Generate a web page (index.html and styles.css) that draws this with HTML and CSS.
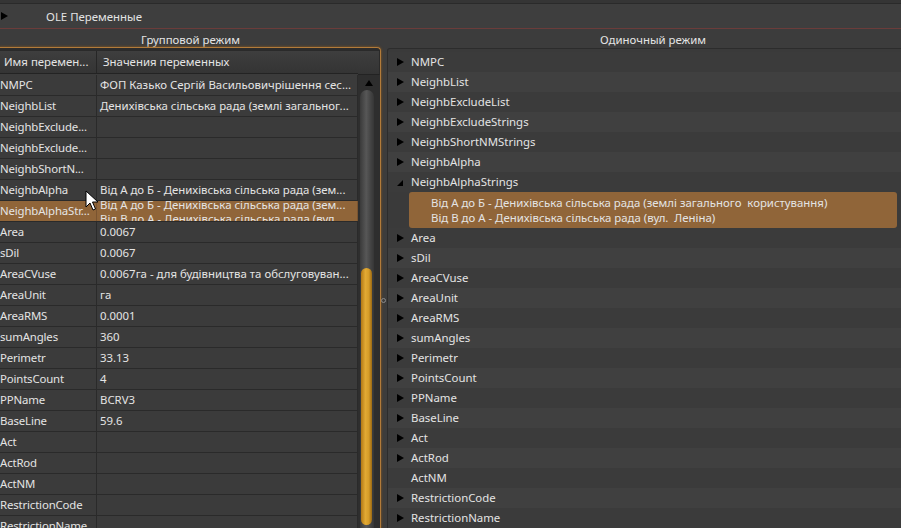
FILE: index.html
```html
<!DOCTYPE html>
<html>
<head>
<meta charset="utf-8">
<link rel="stylesheet" href="styles.css">
</head>
<body>
<div class="topstrip"></div>
<div class="olebar"><span class="tri"></span><span class="ole-text">OLE Переменные</span></div>
<div class="panes">
  <div class="pane left">
    <div class="pane-title">Групповой режим</div>
    <div class="gbox">
      <div class="tbl">
        <div class="cols">
          <div class="hrow">
            <div class="hcell name">Имя  перемен...</div>
            <div class="hcell val">Значения переменных</div>
          </div>
          <div class="row"><div class="c name">NMPC</div><div class="c val">ФОП Казько Сергій Васильовичрішення сес...</div></div>
          <div class="row"><div class="c name">NeighbList</div><div class="c val">Денихівська сільська рада (землі загальног...</div></div>
          <div class="row"><div class="c name">NeighbExclude...</div><div class="c val"></div></div>
          <div class="row"><div class="c name">NeighbExclude...</div><div class="c val"></div></div>
          <div class="row"><div class="c name">NeighbShortN...</div><div class="c val"></div></div>
          <div class="row"><div class="c name">NeighbAlpha</div><div class="c val">Від А до Б - Денихівська сільська рада (зем...</div></div>
          <div class="row sel"><div class="c name">NeighbAlphaStr...</div><div class="c val multi"><div>Від А до Б - Денихівська сільська рада (зем...</div><div>Від В до А - Денихівська сільська рада (вул</div></div></div>
          <div class="row"><div class="c name">Area</div><div class="c val">0.0067</div></div>
          <div class="row"><div class="c name">sDil</div><div class="c val">0.0067</div></div>
          <div class="row"><div class="c name">AreaCVuse</div><div class="c val">0.0067га - для будівництва та обслуговуван...</div></div>
          <div class="row"><div class="c name">AreaUnit</div><div class="c val">га</div></div>
          <div class="row"><div class="c name">AreaRMS</div><div class="c val">0.0001</div></div>
          <div class="row"><div class="c name">sumAngles</div><div class="c val">360</div></div>
          <div class="row"><div class="c name">Perimetr</div><div class="c val">33.13</div></div>
          <div class="row"><div class="c name">PointsCount</div><div class="c val">4</div></div>
          <div class="row"><div class="c name">PPName</div><div class="c val">BCRV3</div></div>
          <div class="row"><div class="c name">BaseLine</div><div class="c val">59.6</div></div>
          <div class="row"><div class="c name">Act</div><div class="c val"></div></div>
          <div class="row"><div class="c name">ActRod</div><div class="c val"></div></div>
          <div class="row"><div class="c name">ActNM</div><div class="c val"></div></div>
          <div class="row"><div class="c name">RestrictionCode</div><div class="c val"></div></div>
          <div class="row"><div class="c name">RestrictionName</div><div class="c val"></div></div>
        </div>
        <div class="vscroll">
          <div class="vs-head"></div>
          <div class="vs-up"></div>
          <div class="vs-trough"><div class="vs-thumb"></div></div>
        </div>
      </div>
    </div>
  </div>
  <div class="splitter"><span class="knob"></span></div>
  <div class="pane right">
    <div class="pane-title">Одиночный режим</div>
    <div class="rbox">
      <div class="item"><span class="arr"></span>NMPC</div>
      <div class="item"><span class="arr"></span>NeighbList</div>
      <div class="item"><span class="arr"></span>NeighbExcludeList</div>
      <div class="item"><span class="arr"></span>NeighbExcludeStrings</div>
      <div class="item"><span class="arr"></span>NeighbShortNMStrings</div>
      <div class="item"><span class="arr"></span>NeighbAlpha</div>
      <div class="item"><span class="arr open"></span>NeighbAlphaStrings</div>
      <div class="child">
        <div>Від А до Б - Денихівська сільська рада (землі загального&nbsp; користування)</div>
        <div>Від В до А - Денихівська сільська рада (вул.&nbsp; Леніна)</div>
      </div>
      <div class="item"><span class="arr"></span>Area</div>
      <div class="item"><span class="arr"></span>sDil</div>
      <div class="item"><span class="arr"></span>AreaCVuse</div>
      <div class="item"><span class="arr"></span>AreaUnit</div>
      <div class="item"><span class="arr"></span>AreaRMS</div>
      <div class="item"><span class="arr"></span>sumAngles</div>
      <div class="item"><span class="arr"></span>Perimetr</div>
      <div class="item"><span class="arr"></span>PointsCount</div>
      <div class="item"><span class="arr"></span>PPName</div>
      <div class="item"><span class="arr"></span>BaseLine</div>
      <div class="item"><span class="arr"></span>Act</div>
      <div class="item"><span class="arr"></span>ActRod</div>
      <div class="item"><span class="arr none"></span>ActNM</div>
      <div class="item"><span class="arr"></span>RestrictionCode</div>
      <div class="item"><span class="arr"></span>RestrictionName</div>
    </div>
  </div>
</div>
<svg class="cursor" width="14" height="22" viewBox="0 0 14 22"><path d="M1 1 L1 17 L5 13 L8 20 L10.5 19 L7.5 12 L13 12 Z" fill="#fff" stroke="#000" stroke-width="1" stroke-linejoin="round"/></svg>
</body>
</html>
```

FILE: styles.css
```css
html, body {
  margin: 0;
  padding: 0;
}
body {
  width: 901px;
  height: 528px;
  overflow: hidden;
  position: relative;
  background: #3c3c3c;
  color: #e4e4e4;
  font-family: "Noto Sans", "Open Sans", sans-serif;
  font-size: 11.4px;
}
.topstrip {
  height: 3px;
  background: #353535;
  border-bottom: 1px solid #2a2a2a;
}
.olebar {
  height: 24px;
  display: flex;
  align-items: center;
  background: #3e3e3e;
  border-bottom: 1px solid #6b3c3a;
}
.olebar .tri {
  width: 0;
  height: 0;
  border-left: 7px solid #000;
  border-top: 4px solid transparent;
  border-bottom: 4px solid transparent;
  margin-left: 1px;
}
.ole-text {
  margin-left: 38px;
}
.panes {
  display: flex;
  height: 499px;
}
.pane {
  display: flex;
  flex-direction: column;
}
.pane.left {
  width: 381px;
}
.pane-title {
  height: 14px;
  padding-top: 4px;
  line-height: 14px;
  text-align: center;
  flex: none;
}
.gbox {
  flex: 1;
  margin-left: -3px;
  border: 1px solid #b27b3a;
  border-bottom: none;
  border-radius: 4px 4px 0 0;
  box-shadow: 0 0 2px 1px rgba(140, 90, 30, 0.5);
  background: #2c2c2c;
  padding: 2px 1px 0 0;
  overflow: hidden;
}
.tbl {
  display: flex;
  height: 100%;
}
.cols {
  width: 360px;
  flex: none;
  overflow: hidden;
  background: #3b3b3b;
}
.hrow {
  display: flex;
  height: 22px;
  background: linear-gradient(#3e3e3e, #343434);
  border-bottom: 1px solid #232323;
  border-top: 1px solid #2a2a2a;
}
.hcell {
  line-height: 22px;
  white-space: nowrap;
  overflow: hidden;
}
.hcell.name {
  width: 92px;
  padding-left: 6px;
  border-right: 1px solid #262626;
}
.hcell.val {
  flex: 1;
  padding-left: 6px;
}
.row {
  display: flex;
  height: 20px;
  border-bottom: 1px solid #2a2a2a;
}
.hrow + .row {
  margin-top: 1px;
}
.c {
  line-height: 20px;
  white-space: nowrap;
  overflow: hidden;
}
.c.name {
  width: 96px;
  padding-left: 2px;
  letter-spacing: -0.15px;
  border-right: 1px solid #2a2a2a;
}
.c.val {
  flex: 1;
  padding-left: 3px;
  border-right: 1px solid #2a2a2a;
}
.row.sel {
  background: #906539;
}
.row.sel .c {
  border-right-color: #7a5430;
}
.c.multi {
  line-height: 14px;
}
.c.multi div {
  height: 14px;
}
.c.multi div:first-child {
  margin-top: -3px;
}
.vscroll {
  width: 22px;
  flex: none;
  display: flex;
  flex-direction: column;
  background: #2e2e2e;
}
.vs-head {
  height: 23px;
  background: linear-gradient(#3e3e3e, #343434);
  border-top: 1px solid #2a2a2a;
  border-bottom: 1px solid #232323;
  border-right: 1px solid #2a2a2a;
  flex: none;
}
.vs-up {
  flex: none;
  width: 0;
  height: 0;
  margin: 5px 0 4px 7px;
  border-bottom: 6px solid #000;
  border-left: 4px solid transparent;
  border-right: 4px solid transparent;
}
.vs-trough {
  flex: 1;
  width: 14px;
  margin-left: 2px;
  border-radius: 7px 7px 0 0;
  background: linear-gradient(90deg, #3a3a3a, #575757 45%, #444 75%, #363636);
  padding-top: 178px;
  box-sizing: border-box;
}
.vs-thumb {
  width: 11px;
  margin-left: 1px;
  height: 257px;
  border-radius: 6px;
  background: linear-gradient(90deg, #b27816, #e2aa34 40%, #d69c28 70%, #9c6a14);
}
.splitter {
  width: 6px;
  flex: none;
  display: flex;
  flex-direction: column;
  align-items: flex-start;
  padding-top: 269px;
  box-sizing: border-box;
}
.knob {
  width: 5px;
  height: 5px;
  border: 1px solid #8a8a8a;
  border-radius: 50%;
  box-sizing: border-box;
}
.pane.right {
  flex: 1;
  margin-right: -18px;
}
.rbox {
  flex: 1;
  margin-top: 1px;
  border: 1px solid #2c2c2c;
  border-bottom: none;
  border-radius: 3px 3px 0 0;
  background: #3a3a3a;
  padding-top: 3px;
  overflow: hidden;
}
.item {
  height: 20px;
  line-height: 20px;
  display: flex;
  align-items: center;
  padding-left: 9px;
  white-space: nowrap;
}
.item:nth-child(odd) {
  background: #3b3b3b;
}
.item:nth-child(even) {
  background: #404040;
}
.arr {
  width: 0;
  height: 0;
  border-left: 7px solid #000;
  border-top: 4px solid transparent;
  border-bottom: 4px solid transparent;
  margin-right: 7px;
}
.arr.none {
  border-left-color: transparent;
}
.arr.open {
  border-top: none;
  border-bottom: 6px solid #000;
  border-left: 6px solid transparent;
  margin-right: 8px;
  margin-top: 2px;
}
.child {
  margin-left: 21px;
  margin-right: 21px;
  height: 36px;
  box-sizing: border-box;
  padding: 3px 0 0 22px;
  border-radius: 3px;
  background: #906539;
  line-height: 15px;
  white-space: nowrap;
}
.cursor {
  position: absolute;
  left: 85px;
  top: 190px;
}
```
